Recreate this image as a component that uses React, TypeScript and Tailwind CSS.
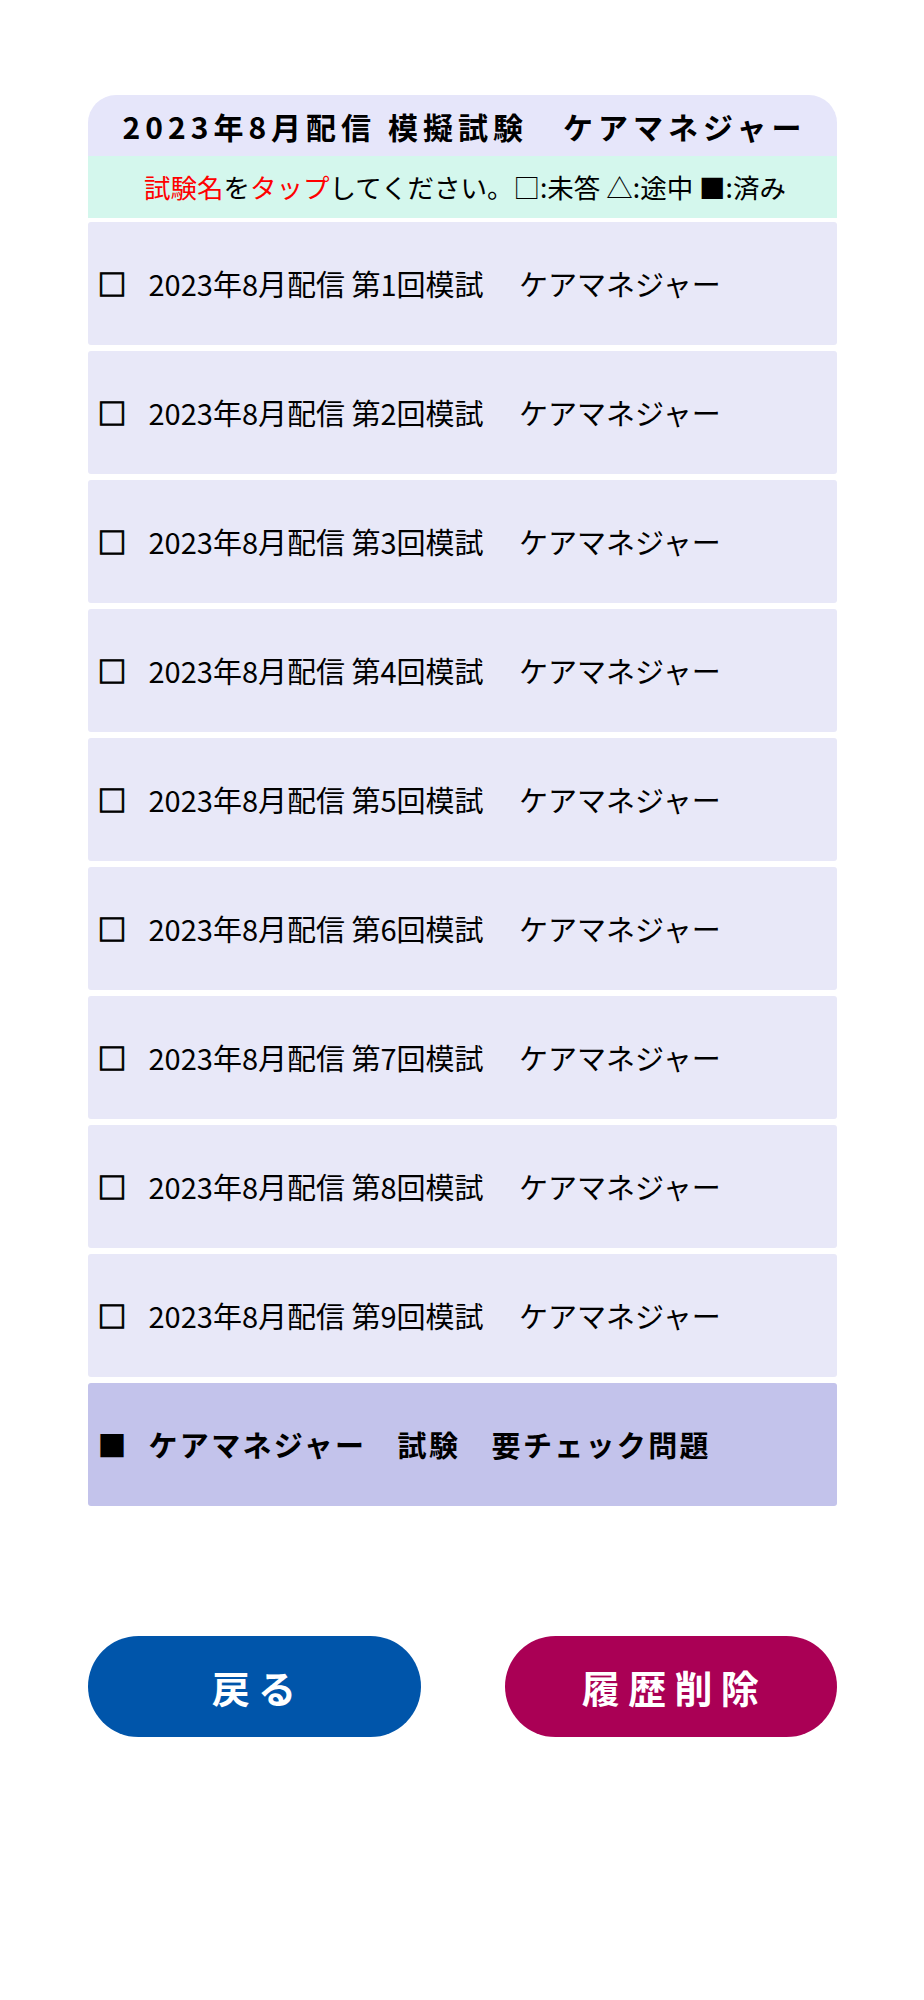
import React from "react";

const rows = [1, 2, 3, 4, 5, 6, 7, 8, 9];

export default function App() {
  return (
    <div className="min-h-[2000px] bg-white pt-[95px] font-['Noto_Sans_CJK_JP','Noto_Sans',sans-serif] text-black">
      <div className="mx-auto w-[749px]">
        <div className="flex h-[61px] items-center justify-center rounded-t-[28px] bg-[#e6e6fa] pl-[5px] text-[30px] font-bold leading-none tracking-[5px]">
          2023年8月配信 模擬試験　ケアマネジャー
        </div>
        <div className="flex h-[62px] items-center justify-center bg-[#d4f7ed] pl-[6px] text-[26.5px] leading-none">
          <span className="text-[#ff0000]">試験名</span>
          <span>を</span>
          <span className="text-[#ff0000]">タップ</span>
          <span>してください。□:未答 △:途中 ■:済み</span>
        </div>
        <div className="mt-[4px] flex flex-col gap-[6px]">
          {rows.map((n) => (
            <div
              key={n}
              className="flex h-[123px] items-center rounded-[3px] bg-[#e8e8f8] pl-[10px] text-[29px] leading-none"
            >
              <span className="w-[51px] font-bold [-webkit-text-stroke:1px_black]">□</span>
              <span>2023年8月配信 第{n}回模試　 ケアマネジャー</span>
            </div>
          ))}
          <div className="flex h-[123px] items-center rounded-[3px] bg-[#c3c3eb] pl-[10px] text-[29px] font-bold leading-none">
            <span className="w-[51px]">■</span>
            <span className="tracking-[0.08em]">ケアマネジャー　試験　要チェック問題</span>
          </div>
        </div>
        <div className="mt-[130px] flex justify-between">
          <button className="flex h-[101px] w-[333px] items-center justify-center rounded-full bg-[#0055aa] pl-[8px] text-[38px] font-bold leading-none tracking-[0.22em] text-white">
            戻る
          </button>
          <button className="flex h-[101px] w-[332px] items-center justify-center rounded-full bg-[#aa0055] pl-[8px] text-[38px] font-bold leading-none tracking-[0.22em] text-white">
            履歴削除
          </button>
        </div>
      </div>
    </div>
  );
}
